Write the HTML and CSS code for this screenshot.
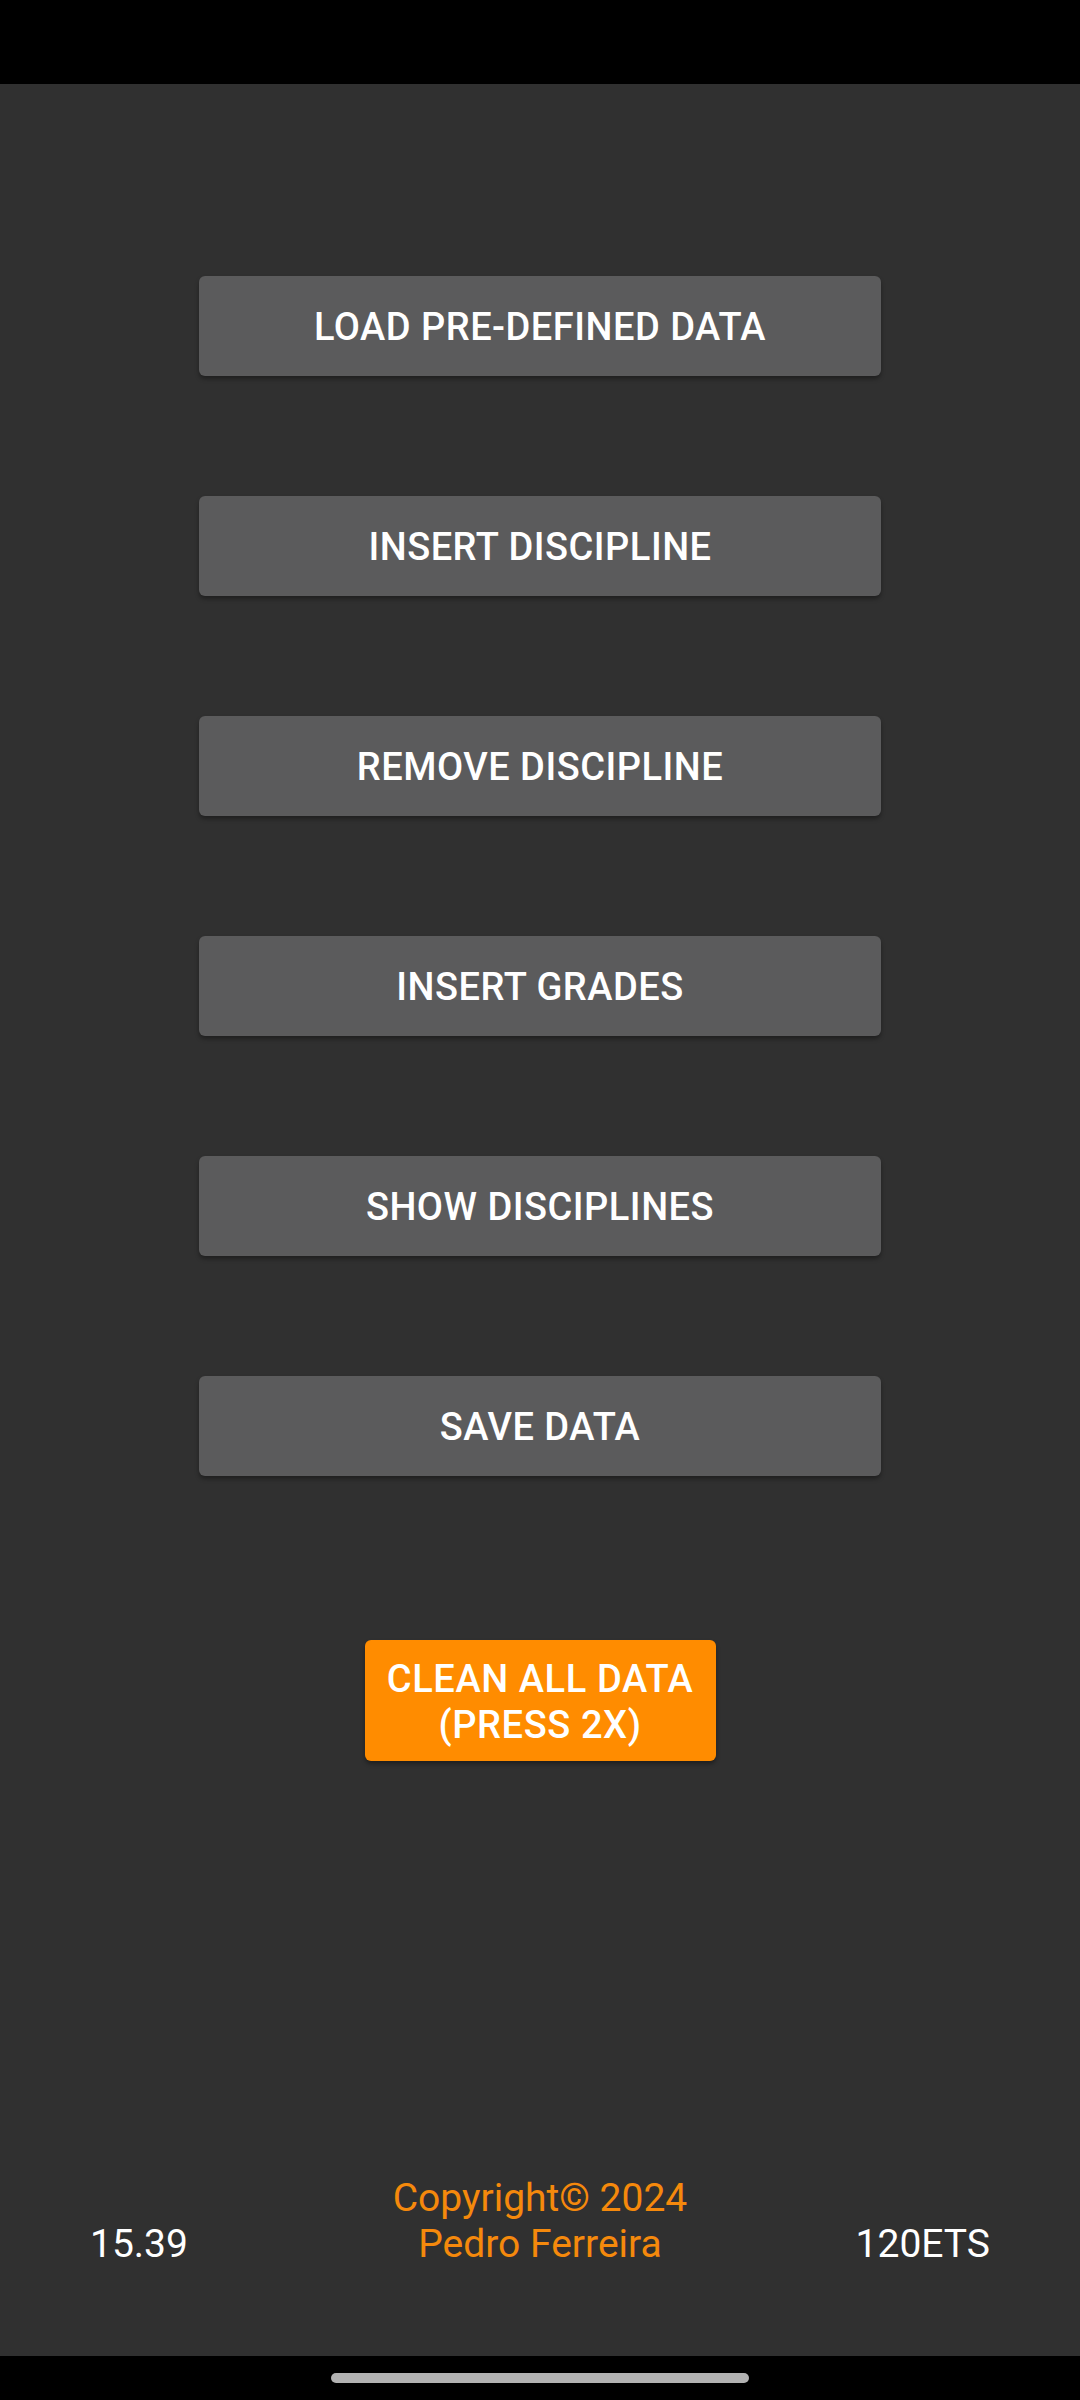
FILE: index.html
```html
<!DOCTYPE html>
<html>
<head>
<meta charset="utf-8">
<link rel="stylesheet" href="styles.css">
</head>
<body>
<div class="screen">
  <div class="statusbar"></div>
  <main class="content">
    <div class="menu">
      <button class="btn">LOAD PRE-DEFINED DATA</button>
      <button class="btn">INSERT DISCIPLINE</button>
      <button class="btn">REMOVE DISCIPLINE</button>
      <button class="btn">INSERT GRADES</button>
      <button class="btn">SHOW DISCIPLINES</button>
      <button class="btn">SAVE DATA</button>
    </div>
    <button class="btn-clean">CLEAN ALL DATA<br>(PRESS 2X)</button>
    <footer class="footer">
      <span class="avg">15.39</span>
      <span class="copy">Copyright© 2024<br>Pedro Ferreira</span>
      <span class="ects">120ETS</span>
    </footer>
  </main>
  <div class="navbar"><span class="pill"></span></div>
</div>
</body>
</html>
```

FILE: styles.css
```css
* { box-sizing: border-box; }
html, body {
  margin: 0;
  padding: 0;
  background: #000;
}
.screen {
  width: 1080px;
  height: 2400px;
  display: flex;
  flex-direction: column;
  font-family: Roboto, "Noto Sans", sans-serif;
}
.statusbar {
  height: 84px;
  background: #000;
  flex: none;
}
.content {
  flex: 1;
  background: #303030;
  display: flex;
  flex-direction: column;
  align-items: center;
  padding-top: 192px;
}
.menu {
  display: flex;
  flex-direction: column;
  gap: 120px;
}
.btn {
  width: 682px;
  height: 100px;
  border: none;
  border-radius: 6px;
  background: #5b5b5c;
  color: #fff;
  font-family: Roboto, sans-serif;
  font-weight: 500;
  font-size: 38px;
  letter-spacing: 0.5px;
  box-shadow: 0 3px 4px rgba(0,0,0,0.35);
  padding: 2px 0 0;
}
.btn-clean {
  margin-top: 164px;
  width: 351px;
  height: 121px;
  border: none;
  border-radius: 6px;
  background: #ff8c00;
  color: #fff;
  font-family: Roboto, sans-serif;
  font-weight: 500;
  font-size: 38px;
  line-height: 46px;
  letter-spacing: 0.6px;
  padding: 2px 0 0;
  box-shadow: 0 3px 4px rgba(0,0,0,0.35);
}
.footer {
  margin-top: auto;
  margin-bottom: 89px;
  width: 100%;
  padding: 0 90px;
  display: grid;
  grid-template-columns: 1fr auto 1fr;
  align-items: end;
  font-size: 39px;
  line-height: 46px;
}
.avg {
  justify-self: start;
  color: #fff;
}
.copy {
  justify-self: center;
  text-align: center;
  color: #f5890c;
}
.ects {
  justify-self: end;
  color: #fff;
}
.navbar {
  height: 44px;
  flex: none;
  background: #000;
  display: flex;
  justify-content: center;
  padding-top: 17px;
}
.pill {
  width: 418px;
  height: 10px;
  border-radius: 5px;
  background: #b2b2b2;
}
```
